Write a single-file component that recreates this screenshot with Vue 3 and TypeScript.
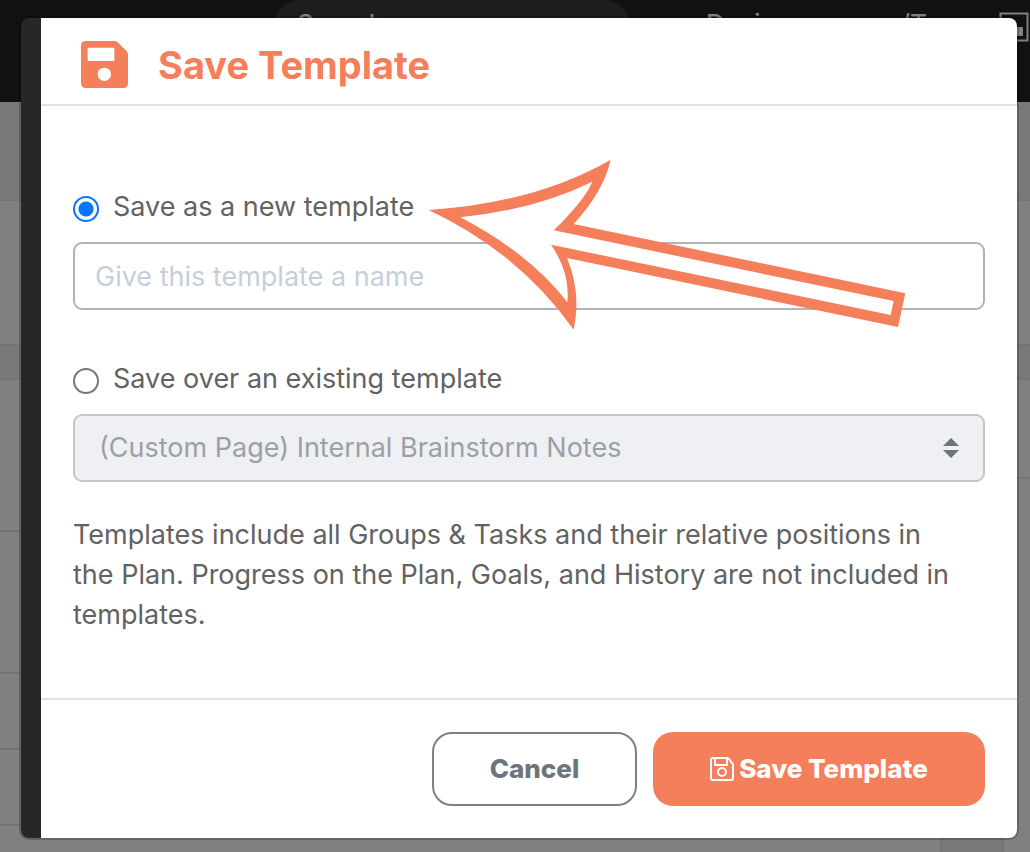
<script setup lang="ts">
import { ref } from 'vue'

type SaveMode = 'new' | 'existing'

const mode = ref<SaveMode>('new')
const templateName = ref('')
const existing = ref('(Custom Page) Internal Brainstorm Notes')
const existingTemplates: string[] = ['(Custom Page) Internal Brainstorm Notes']
</script>

<template>
  <div class="screen">
    <div class="backdrop" aria-hidden="true">
      <div class="topbar">
        <div class="search">Search</div>
        <span class="nav-item">Design</span>
        <span class="nav-item nav-last">/T</span>
        <svg class="pip" viewBox="0 0 30 30">
          <rect x="1.5" y="1.5" width="27" height="27" fill="none" stroke="#808080" stroke-width="2" />
          <rect x="12" y="15" width="12" height="9" fill="#808080" />
        </svg>
      </div>
      <div class="columns">
        <div class="column">
          <div class="row shade h99"></div>
          <div class="row h145"></div>
          <div class="row shade h34"></div>
          <div class="row h152"></div>
          <div class="row h142"></div>
          <div class="row h76"></div>
          <div class="row h76"></div>
          <div class="rest"></div>
        </div>
        <div class="column">
          <div class="row shade h99"></div>
          <div class="row h145"></div>
          <div class="row shade h34"></div>
          <div class="row h99"></div>
          <div class="rest lane"><div class="gutter"></div></div>
        </div>
      </div>
    </div>

    <form class="modal" role="dialog" aria-labelledby="dialog-title" @submit.prevent>
      <header class="head">
        <svg class="head-icon" viewBox="0 0 141 141" aria-hidden="true">
          <path
            fill="#f57f5b"
            fill-rule="evenodd"
            d="M15 0H100Q106 0 110 4L137 31Q141 35 141 41V126Q141 141 126 141H15Q0 141 0 126V15Q0 0 15 0ZM20 20V60H100V20ZM70 80A20 20 0 1 0 70 120A20 20 0 1 0 70 80Z"
          />
        </svg>
        <h1 id="dialog-title">Save Template</h1>
      </header>

      <div class="body">
        <label class="choice">
          <input v-model="mode" type="radio" name="mode" value="new" />
          <span>Save as a new template</span>
        </label>
        <input
          v-model="templateName"
          class="field name"
          type="text"
          placeholder="Give this template a name"
          aria-label="Template name"
        />
        <label class="choice second">
          <input v-model="mode" type="radio" name="mode" value="existing" />
          <span>Save over an existing template</span>
        </label>
        <div class="select-wrap">
          <select v-model="existing" class="field pick" :disabled="mode === 'new'" aria-label="Existing template">
            <option v-for="t in existingTemplates" :key="t" :value="t">{{ t }}</option>
          </select>
          <svg class="carets" viewBox="0 0 16 20" aria-hidden="true">
            <path d="M8 0L16 8H0ZM0 12H16L8 20Z" fill="#6c757d" />
          </svg>
        </div>
        <p class="note">
          Templates include all Groups &amp; Tasks and their relative positions in the Plan. Progress on the
          Plan, Goals, and History are not included in templates.
        </p>
      </div>

      <footer class="foot">
        <button type="button" class="btn cancel">Cancel</button>
        <button type="submit" class="btn save">
          <svg class="btn-icon" viewBox="0 0 24 24" fill="none" stroke="#fff" stroke-width="2" aria-hidden="true">
            <path d="M3 1H17Q18 1 19 2L22 6Q23 7 23 8V21Q23 23 21 23H3Q1 23 1 21V3Q1 1 3 1Z" />
            <path d="M5 1V8H17V1" />
            <circle cx="12" cy="15" r="4" />
          </svg>
          Save Template
        </button>
      </footer>

      <svg class="arrow" viewBox="0 0 1440 516" aria-hidden="true">
        <g transform="translate(-50 -58)">
          <path
            fill="#f57f5b"
            d="M55 211Q375 190 601 60Q580 155 490 253L1485 461L1463 562L470 355Q514 462 490 570Q328 340 55 211Z"
          />
          <path
            fill="#fff"
            d="M150 233Q375 210 546 126Q524 180 430 272L1450 484L1441 526L422 315Q480 399 471 488Q362 344 150 233Z"
          />
        </g>
      </svg>
    </form>
  </div>
</template>

<style>
body {
  margin: 0;
}
</style>

<style scoped>
* {
  box-sizing: border-box;
}

.screen {
  position: relative;
  min-height: 100vh;
  padding: 18px 13px 14px 21px;
  display: flex;
  overflow: hidden;
  font-family: Inter, 'Liberation Sans', sans-serif;
  color: #626262;
}

.backdrop {
  position: absolute;
  inset: 0;
  display: flex;
  flex-direction: column;
  background: #808080;
}

.topbar {
  display: flex;
  flex: none;
  height: 102px;
  padding: 0 0 0 273px;
  background: #111;
  color: #808080;
  font-size: 26px;
  font-weight: 500;
  line-height: 28px;
}

.search {
  width: 358px;
  height: 56px;
  margin-right: 75px;
  padding: 10px 24px;
  border-radius: 28px;
  background: #1d1d1d;
}

.nav-item {
  padding-top: 10px;
}

.nav-last {
  margin-left: auto;
}

.pip {
  width: 30px;
  height: 30px;
  margin: 12px 1px 0 72px;
}

.columns {
  flex: 1;
  display: grid;
  grid-template-columns: 1fr 1fr;
}

.column {
  display: flex;
  flex-direction: column;
}

.row {
  flex: none;
  border-bottom: 2px solid #747474;
}

.shade {
  background: #797979;
}

.h34 {
  height: 34px;
}

.h76 {
  height: 76px;
}

.h99 {
  height: 99px;
}

.h142 {
  height: 142px;
}

.h145 {
  height: 145px;
}

.h152 {
  height: 152px;
}

.rest {
  flex: 1;
}

.lane {
  display: flex;
  justify-content: flex-end;
  padding-right: 26px;
}

.gutter {
  width: 64px;
  background: #797979;
  border: solid #747474;
  border-width: 0 2px;
}

.modal {
  position: relative;
  flex: 1;
  min-width: 0;
  display: flex;
  flex-direction: column;
  border-left: 20px solid #272727;
  border-radius: 8px;
  background: #fff;
  box-shadow: 0 0 0 2px rgba(0, 0, 0, 0.2);
}

.head {
  display: flex;
  align-items: center;
  gap: 30px;
  height: 88px;
  padding: 6px 40px 0;
  border-bottom: 2px solid #dee2e6;
}

.head-icon {
  width: 47px;
  height: 47px;
}

h1 {
  margin: 0;
  padding-top: 2px;
  font-size: 38px;
  line-height: 48px;
  font-weight: 700;
  color: #f57f5b;
}

.body {
  flex: 1;
  padding: 80px 32px 32px;
}

.choice {
  display: flex;
  align-items: center;
  gap: 14px;
  height: 44px;
  font-size: 27px;
  line-height: 40px;
}

.choice span {
  padding-bottom: 2px;
}

.choice input {
  appearance: none;
  flex: none;
  width: 26px;
  height: 26px;
  margin: 2px 0 0;
  border: 2px solid #767676;
  border-radius: 50%;
  background: #fff;
}

.choice input:checked {
  border-color: #0a75ff;
  background: radial-gradient(circle, #0a75ff 0 7px, #fff 8px);
}

.field {
  display: block;
  width: 100%;
  height: 68px;
  margin: 0;
  border: 2px solid #b3b3b3;
  border-radius: 9px;
  background: #fff;
  font: 400 27px/40px Inter, 'Liberation Sans', sans-serif;
}

.name {
  margin-top: 12px;
  padding: 0 20px;
  color: #626262;
}

.name::placeholder {
  color: #c3cfda;
  opacity: 1;
}

.second {
  margin-top: 48px;
}

.select-wrap {
  position: relative;
  margin-top: 12px;
}

.pick {
  appearance: none;
  padding: 0 60px 0 24px;
  border-color: #c6c6c6;
  background: #eff0f4;
  color: #9aa1a5;
  opacity: 1;
}

.carets {
  position: absolute;
  top: 24px;
  right: 26px;
  width: 16px;
  height: 20px;
  pointer-events: none;
}

.note {
  margin: 33px 0 0;
  padding-right: 24px;
  font-size: 27px;
  line-height: 40px;
}

.foot {
  display: flex;
  justify-content: flex-end;
  gap: 16px;
  padding: 32px;
  border-top: 2px solid #dee2e6;
}

.btn {
  display: flex;
  align-items: center;
  justify-content: center;
  height: 74px;
  border-radius: 20px;
  font: 800 26px/40px Inter, 'Liberation Sans', sans-serif;
}

.cancel {
  width: 205px;
  border: 2px solid #808080;
  background: #fff;
  color: #6c757d;
}

.save {
  width: 332px;
  gap: 5px;
  border: 0;
  background: #f57f5b;
  color: #fff;
}

.btn-icon {
  width: 24px;
  height: 24px;
}

.arrow {
  position: absolute;
  top: 141px;
  left: 386px;
  width: 480px;
  height: 172px;
  pointer-events: none;
}
</style>
